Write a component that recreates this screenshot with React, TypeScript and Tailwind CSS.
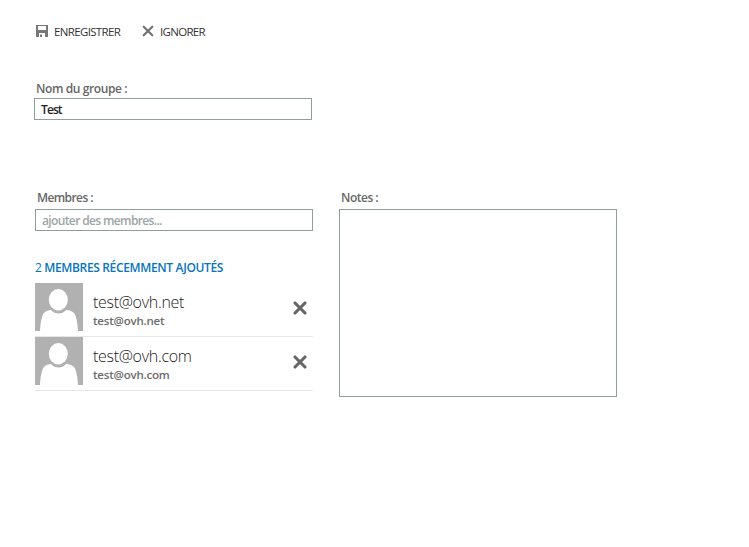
import React from "react";

function SaveIcon() {
  return (
    <svg width="12" height="12" viewBox="0 0 12 12" className="block shrink-0">
      <path fill="#777" fillRule="evenodd" d="M0 0H12V12H9V8H3V12H0ZM2 1V5H10V1Z" />
      <path fill="#777" d="M4 9.500H6V12H4Z" />
    </svg>
  );
}

function Cross({ size, color, stroke }: { size: number; color: string; stroke: number }) {
  return (
    <svg width={size} height={size} viewBox="0 0 14 14" className="block shrink-0">
      <path d="M2 2L12 12M12 2L2 12" stroke={color} strokeWidth={stroke} strokeLinecap="round" fill="none" />
    </svg>
  );
}

function Avatar() {
  return (
    <svg width="48" height="48" viewBox="0 0 48 48" className="block shrink-0">
      <rect width="48" height="48" fill="#b1b1b1" />
      <ellipse cx="23.3" cy="16.7" rx="9.5" ry="10.7" fill="#fff" />
      <path d="M5 48C5.5 40 6.500 33 9 30C11 27.700 14 27 16 27C18 29.500 20.500 30.500 23.500 30.500C26.500 30.500 29 29.500 31 27C34 27 37 28 39 30C41.500 33 42.500 40 43 48Z" fill="#fff" />
    </svg>
  );
}

function Member({ email }: { email: string }) {
  return (
    <li className="flex h-[54px] w-[278px] border-b border-[#e6e6e6]">
      <Avatar />
      <div className="ml-[10px] flex-1 whitespace-nowrap pt-[9px]">
        <div className="h-[21px] text-[16px] font-light leading-[21px] tracking-[-0.3px] text-[#222]">{email}</div>
        <div className="h-[16px] text-[11.5px] font-semibold leading-[16px] tracking-[-0.2px] text-[#6b6b6b]">{email}</div>
      </div>
      <button type="button" aria-label="Supprimer" className="mr-[6px] mt-[18px] h-[14px]">
        <Cross size={14} color="#666" stroke={3.1} />
      </button>
    </li>
  );
}

export default function App() {
  return (
    <main className="h-[547px] w-[749px] overflow-hidden bg-white font-['Open_Sans','Noto_Sans',sans-serif] text-[12px] text-[#666]">
      <header className="flex h-[42px] items-start whitespace-nowrap pl-9 pt-[24px] text-[11.5px] leading-4 text-[#333]">
        <button type="button" className="flex w-[106px] gap-[6px]">
          <span className="mt-px"><SaveIcon /></span>
          <span className="tracking-[-0.65px]">ENREGISTRER</span>
        </button>
        <button type="button" className="flex gap-[6px]">
          <span className="mt-px"><Cross size={12} color="#737373" stroke={2.6} /></span>
          <span className="tracking-[-0.7px]">IGNORER</span>
        </button>
      </header>

      <section className="ml-[34px] mt-[39px] w-[278px]">
        <div className="h-[17px] pl-[2px] font-semibold leading-4 tracking-[-0.4px]">Nom du groupe :</div>
        <div className="h-[22px] border border-[#929e9e] pl-[6px] text-[12px] font-semibold leading-[22px] tracking-[-0.9px] text-[#222]">Test</div>
      </section>

      <div className="ml-[35px] mt-[70px] flex gap-[26px]">
        <section className="w-[278px]">
          <div className="h-[19px] pl-[2px] font-semibold leading-4 tracking-[-0.6px]">Membres :</div>
          <div className="h-[22px] border border-[#929e9e] pl-[6px] font-semibold leading-[22px] tracking-[-0.63px] text-[#9ba5a5]">ajouter des membres...</div>
          <h2 className="mt-[29px] h-[23px] whitespace-nowrap font-semibold leading-4 tracking-[-0.35px] text-[#0874bd]">
            <span className="font-normal">2</span> MEMBRES RÉCEMMENT AJOUTÉS
          </h2>
          <ul>
            <Member email="test@ovh.net" />
            <Member email="test@ovh.com" />
          </ul>
        </section>
        <section className="w-[278px]">
          <div className="h-[19px] pl-[2px] font-semibold leading-4 tracking-[-0.5px]">Notes :</div>
          <div className="h-[188px] border border-[#929e9e]" />
        </section>
      </div>
    </main>
  );
}
